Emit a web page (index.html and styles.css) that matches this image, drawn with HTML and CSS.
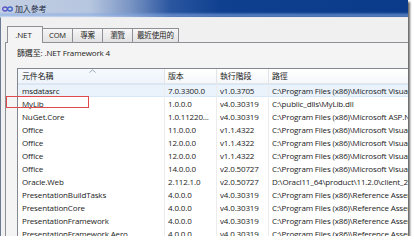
FILE: index.html
```html
<!DOCTYPE html>
<html lang="zh-Hant">
<head>
  <meta charset="UTF-8" />
  <title>加入參考</title>
  <link rel="stylesheet" href="styles.css">
</head>
<body>
  <div class="window">
    <div class="titlebar">
      <svg class="app-icon" width="11" height="6" viewBox="0 0 11 6">
        <ellipse cx="3" cy="3" rx="2.3" ry="2" fill="none" stroke="#5b4fc4" stroke-width="1.3"/>
        <ellipse cx="8" cy="3" rx="2.3" ry="2" fill="none" stroke="#3f63c9" stroke-width="1.3"/>
      </svg>
      <span class="title">加入參考</span>
    </div>
    <div class="client">
      <div class="tabs">
        <div class="tab active">.NET</div>
        <div class="tab">COM</div>
        <div class="tab">專案</div>
        <div class="tab">瀏覽</div>
        <div class="tab">最近使用的</div>
      </div>
      <div class="panel">
        <div class="filter">篩選至: .NET Framework 4</div>
        <div class="list">
          <div class="row head">
            <div class="cell sorted">元件名稱
              <svg class="sort-arrow" width="7" height="4" viewBox="0 0 7 4"><path d="M0.5 3.5 L3.5 0.8 L6.5 3.5" fill="none" stroke="#97a5b9" stroke-width="1"/></svg>
            </div>
            <div class="cell">版本</div>
            <div class="cell">執行階段</div>
            <div class="cell">路徑</div>
          </div>
          <div class="row hot">
            <div class="cell">msdatasrc</div><div class="cell">7.0.3300.0</div><div class="cell">v1.0.3705</div><div class="cell">C:\Program Files (x86)\Microsoft Visual Studio .NET\Primary</div>
          </div>
          <div class="row">
            <div class="cell">MyLib</div><div class="cell">1.0.0.0</div><div class="cell">v4.0.30319</div><div class="cell">C:\public_dlls\MyLib.dll</div>
          </div>
          <div class="row">
            <div class="cell">NuGet.Core</div><div class="cell">1.0.11220...</div><div class="cell">v4.0.30319</div><div class="cell">C:\Program Files (x86)\Microsoft ASP.NET\ASP.NET</div>
          </div>
          <div class="row">
            <div class="cell">Office</div><div class="cell">11.0.0.0</div><div class="cell">v1.1.4322</div><div class="cell">C:\Program Files (x86)\Microsoft Visual Studio</div>
          </div>
          <div class="row">
            <div class="cell">Office</div><div class="cell">12.0.0.0</div><div class="cell">v1.1.4322</div><div class="cell">C:\Program Files (x86)\Microsoft Visual Studio</div>
          </div>
          <div class="row">
            <div class="cell">Office</div><div class="cell">12.0.0.0</div><div class="cell">v1.1.4322</div><div class="cell">C:\Program Files (x86)\Microsoft Visual Studio</div>
          </div>
          <div class="row">
            <div class="cell">Office</div><div class="cell">14.0.0.0</div><div class="cell">v2.0.50727</div><div class="cell">C:\Program Files (x86)\Microsoft Visual Studio</div>
          </div>
          <div class="row">
            <div class="cell">Oracle.Web</div><div class="cell">2.112.1.0</div><div class="cell">v2.0.50727</div><div class="cell">D:\Oracl11_64\product\11.2.0\client_2\ASP.NET</div>
          </div>
          <div class="row">
            <div class="cell">PresentationBuildTasks</div><div class="cell">4.0.0.0</div><div class="cell">v4.0.30319</div><div class="cell">C:\Program Files (x86)\Reference Assemblies</div>
          </div>
          <div class="row">
            <div class="cell">PresentationCore</div><div class="cell">4.0.0.0</div><div class="cell">v4.0.30319</div><div class="cell">C:\Program Files (x86)\Reference Assemblies</div>
          </div>
          <div class="row">
            <div class="cell">PresentationFramework</div><div class="cell">4.0.0.0</div><div class="cell">v4.0.30319</div><div class="cell">C:\Program Files (x86)\Reference Assemblies</div>
          </div>
          <div class="row">
            <div class="cell">PresentationFramework.Aero</div><div class="cell">4.0.0.0</div><div class="cell">v4.0.30319</div><div class="cell">C:\Program Files (x86)\Reference Assemblies</div>
          </div>
        </div>
      </div>
    </div>
    <div class="mark"></div>
  </div>
</body>
</html>
```

FILE: styles.css
```css
body {
  margin: 0;
  background: #fff;
  font-family: "Open Sans", "Noto Sans CJK TC", sans-serif;
  font-size: 8px;
  letter-spacing: -0.15px;
  color: #1b1b1b;
}
.window {
  position: relative;
  width: 408px;
  height: 236px;
  overflow: hidden;
  background: #f0f0f0;
  box-shadow: 2px 2px 2px rgba(0, 0, 0, 0.6);
}
.titlebar {
  height: 17px;
  display: flex;
  align-items: center;
  gap: 2px;
  padding-left: 2px;
  background:
    linear-gradient(to bottom, rgba(255,255,255,0) 0, rgba(255,255,255,0) 12px, rgba(130,168,228,0.6) 15px, rgba(255,255,255,0.25) 17px),
    linear-gradient(to right, #c3cfe3 0, #b6c6df 90px, #7a95c4 130px, #2b56a0 170px, #0f408f 220px, #0a3b8b 100%);
}
.title {
  color: #1f2c44;
  line-height: 1;
}
.client {
  height: 219px;
  box-sizing: border-box;
  border-top: 1px solid #e9edf3;
  border-left: 1px solid #6b7a92;
  padding: 8px 0 0 4px;
}
.tabs {
  display: flex;
  align-items: flex-end;
  height: 17px;
  padding-left: 2px;
  margin-bottom: -1px;
  position: relative;
  z-index: 1;
}
.tab {
  height: 13px;
  line-height: 13px;
  min-width: 21px;
  padding: 0 4px;
  font-size: 7.5px;
  text-align: center;
  border: 1px solid #8e9096;
  margin-left: -1px;
  background: linear-gradient(to bottom, #f6f6f6, #e2e2e2);
}
.tab.active {
  height: 16px;
  line-height: 15px;
  padding: 0 8px 0 5px;
  font-size: 8px;
  border-bottom: none;
  background: #f4f4f4;
  margin-left: 0;
  position: relative;
  z-index: 1;
}
.panel {
  height: 200px;
  border-top: 1px solid #8e9096;
  border-left: 1px solid #8e9096;
  background: #f4f4f4;
}
.filter {
  margin-left: 11px;
  padding-top: 5px;
  line-height: 10px;
}
.list {
  margin: 10px 0 0 11px;
  width: 420px;
  height: 200px;
  border: 1px solid #828790;
  background: #fff;
}
.row {
  display: grid;
  grid-template-columns: 146px 52px 52px 1fr;
  height: 13px;
  line-height: 13px;
  white-space: nowrap;
}
.row .cell {
  padding-left: 4px;
  overflow: hidden;
}
.row .cell + .cell {
  border-left: 1px solid #ececec;
  padding-left: 3px;
}
.row.head {
  height: 14px;
  line-height: 14px;
  border-bottom: 1px solid #e3e5e8;
  background: linear-gradient(to bottom, #ffffff, #f6f7f9);
}
.row.head .cell + .cell {
  border-left-color: #e1e4e8;
}
.row.head .sorted {
  position: relative;
  background: linear-gradient(to bottom, #f6fafe, #eef4fb);
}
.sort-arrow {
  position: absolute;
  top: 0;
  left: 71px;
}
.row.hot {
  background: #eaf3fc;
  box-shadow: inset 0 1px #d6e8f8, inset 0 -1px #d6e8f8;
}
.mark {
  position: absolute;
  left: 6px;
  top: 96px;
  width: 81px;
  height: 10px;
  border: 1.5px solid #e04a4e;
}
```
